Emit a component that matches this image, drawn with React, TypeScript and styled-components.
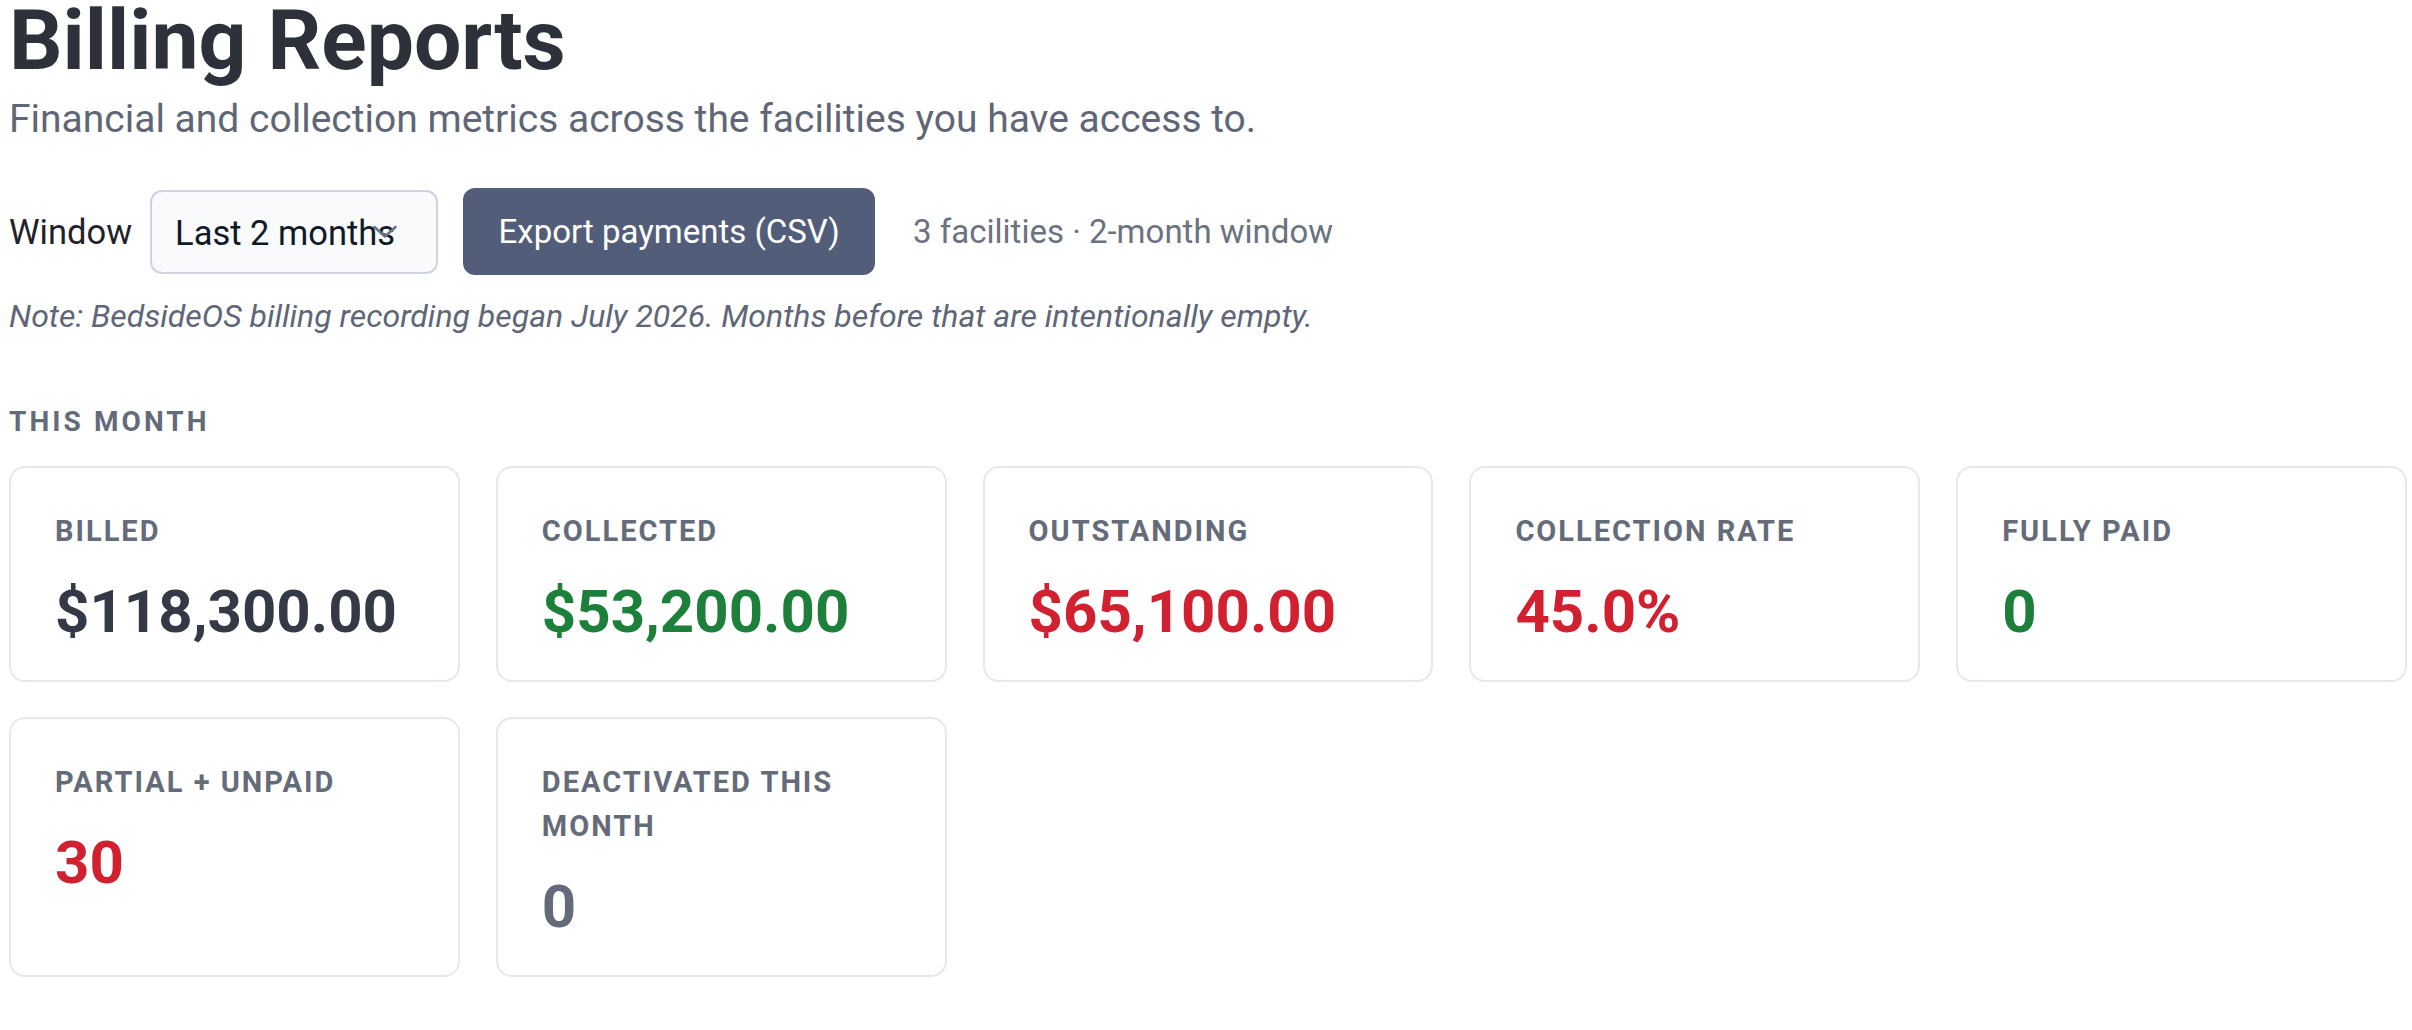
import React from 'react';
import styled, { createGlobalStyle } from 'styled-components';

const GlobalStyle = createGlobalStyle`
  html, body {
    margin: 0;
    padding: 0;
    background: #ffffff;
  }
  body {
    font-family: Roboto, "Liberation Sans", Arial, sans-serif;
    -webkit-font-smoothing: antialiased;
  }
  * { box-sizing: border-box; }
`;

const Page = styled.main`
  width: 2407px;
  padding-left: 9px;
  display: flex;
  flex-direction: column;
`;

const Title = styled.h1`
  margin: 0;
  padding-top: 2px;
  font-size: 84px;
  line-height: 78px;
  font-weight: 700;
  color: #2d3139;
`;

const Subtitle = styled.p`
  margin: 13px 0 0;
  font-size: 39px;
  line-height: 53px;
  color: #5f6776;
`;

const Controls = styled.div`
  margin-top: 42px;
  height: 87px;
  display: flex;
  align-items: center;
  gap: 25px;
`;

const Field = styled.label`
  display: flex;
  align-items: center;
  gap: 18px;
`;

const FieldLabel = styled.span`
  font-size: 34.5px;
  color: #1f2329;
`;

const SelectBox = styled.div`
  position: relative;
  width: 288px;
  height: 84px;
  display: flex;
  align-items: center;
  padding-left: 23px;
  padding-top: 3px;
  border: 2px solid #cdd3e1;
  border-radius: 12px;
  background: #f8fafb;
  font-size: 34.5px;
  color: #111827;
  white-space: nowrap;
`;

const Chevron = styled.svg`
  position: absolute;
  right: 39px;
  top: 50%;
  transform: translateY(-50%);
  width: 24px;
  height: 13px;
`;

const PrimaryButton = styled.button`
  width: 412px;
  height: 87px;
  border: none;
  border-radius: 12px;
  background: #525e79;
  color: #ffffff;
  font-family: inherit;
  font-size: 33px;
  cursor: pointer;
`;

const Meta = styled.span`
  margin-left: 13px;
  font-size: 33px;
  color: #6b7280;
`;

const Note = styled.p`
  margin: 19px 0 0;
  font-size: 32px;
  line-height: 45px;
  font-style: italic;
  color: #5e6677;
`;

const SectionLabel = styled.h2`
  margin: 62px 0 0;
  font-size: 28px;
  line-height: 42px;
  font-weight: 700;
  letter-spacing: 0.11em;
  text-transform: uppercase;
  color: #636b79;
`;

const Grid = styled.section`
  margin-top: 23px;
  display: grid;
  grid-template-columns: repeat(5, 1fr);
  column-gap: 36px;
  row-gap: 35px;
`;

const Card = styled.div`
  border: 2px solid #e5e8ef;
  border-radius: 16px;
  background: #ffffff;
  padding: 41px 44px 37px;
`;

const CardLabel = styled.div`
  font-size: 29px;
  line-height: 44px;
  font-weight: 700;
  letter-spacing: 2px;
  text-transform: uppercase;
  color: #646b79;
`;

type Tone = 'default' | 'success' | 'danger' | 'muted';

const toneColor: Record<Tone, string> = {
  default: '#343a45',
  success: '#1c7f3a',
  danger: '#d1202f',
  muted: '#646b78',
};

const CardValue = styled.div<{ $tone: Tone }>`
  margin-top: 28px;
  font-size: 60px;
  line-height: 62px;
  font-weight: 700;
  color: ${(p) => toneColor[p.$tone]};
`;

const metrics: { label: string; value: string; tone: Tone }[] = [
  { label: 'Billed', value: '$118,300.00', tone: 'default' },
  { label: 'Collected', value: '$53,200.00', tone: 'success' },
  { label: 'Outstanding', value: '$65,100.00', tone: 'danger' },
  { label: 'Collection rate', value: '45.0%', tone: 'danger' },
  { label: 'Fully paid', value: '0', tone: 'success' },
  { label: 'Partial + unpaid', value: '30', tone: 'danger' },
  { label: 'Deactivated this month', value: '0', tone: 'muted' },
];

export default function App() {
  return (
    <>
      <GlobalStyle />
      <Page>
        <Title>Billing Reports</Title>
        <Subtitle>Financial and collection metrics across the facilities you have access to.</Subtitle>
        <Controls>
          <Field>
            <FieldLabel>Window</FieldLabel>
            <SelectBox role="combobox" aria-expanded="false">
              Last 2 months
              <Chevron viewBox="0 0 24 13" fill="none">
                <polyline
                  points="1.5,1.5 12,11 22.5,1.5"
                  stroke="#6b7280"
                  strokeWidth="2.6"
                  strokeLinecap="round"
                  strokeLinejoin="round"
                />
              </Chevron>
            </SelectBox>
          </Field>
          <PrimaryButton type="button">Export payments (CSV)</PrimaryButton>
          <Meta>3 facilities · 2-month window</Meta>
        </Controls>
        <Note>Note: BedsideOS billing recording began July 2026. Months before that are intentionally empty.</Note>
        <SectionLabel>This month</SectionLabel>
        <Grid>
          {metrics.map((m) => (
            <Card key={m.label}>
              <CardLabel>{m.label}</CardLabel>
              <CardValue $tone={m.tone}>{m.value}</CardValue>
            </Card>
          ))}
        </Grid>
      </Page>
    </>
  );
}
